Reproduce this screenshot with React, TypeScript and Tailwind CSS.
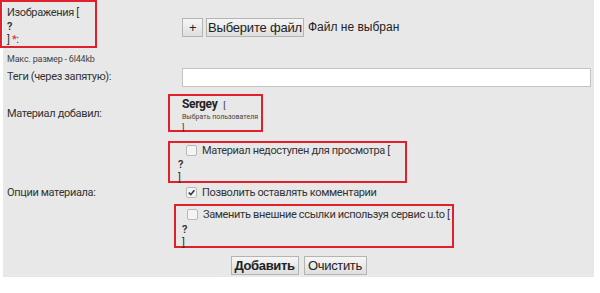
import React from "react";

const font = "font-['Roboto',sans-serif]";

function Box({ on }: { on?: boolean }) {
  return (
    <span className="inline-flex h-[11px] w-[11px] shrink-0 items-center justify-center rounded-[2px] border border-[#b9b9b9] bg-[#f4f4f4]">
      {on && (
        <svg viewBox="0 0 10 10" className="h-[9px] w-[9px]">
          <path d="M2 5.2 4.2 7.4 8.2 2.4" fill="none" stroke="#333" strokeWidth="1.8" />
        </svg>
      )}
    </span>
  );
}

function Btn({ children, bold, className = "" }: { children: React.ReactNode; bold?: boolean; className?: string }) {
  return (
    <button
      className={`flex h-[19px] items-center justify-center whitespace-nowrap border border-[#b4b4b4] bg-gradient-to-b from-[#f6f6f6] to-[#dedede] px-0 font-['Liberation_Sans',sans-serif] text-[13px] leading-none text-[#222] ${bold ? "font-bold" : ""} ${className}`}
    >
      {children}
    </button>
  );
}

export default function App() {
  return (
    <div className={`h-[293px] w-[600px] overflow-hidden whitespace-nowrap bg-white text-[11px] leading-[13.5px] tracking-[-0.35px] text-[#333] ${font}`}>
      <div className="ml-[3px] h-[277px] w-[591px] bg-[#e8e8e8]">
        {/* images */}
        <div className="flex h-[66px]">
          <div className="w-[179px]">
            <div className="-ml-[3px] h-[48px] w-[97px] border-2 border-[#e0202a] pl-[5px] pt-[4px]">
              <div>Изображения [</div>
              <div className="font-semibold">?</div>
              <div>
                ] <span className="text-[#e0202a]">*</span>:
              </div>
            </div>
            <div className="mt-[6px] pl-[4px] text-[9px] leading-[10px] tracking-[-0.2px] text-[#444]">Макс. размер - 6l44kb</div>
          </div>
          <div className="flex items-start gap-[3px] pt-[18px]">
            <Btn className="w-[21px]">+</Btn>
            <Btn className="w-[98px] tracking-[-0.2px]">Выберите файл</Btn>
            <span className="ml-[1px] pt-[3px] font-['Liberation_Sans',sans-serif] text-[12px] tracking-normal text-[#222]">Файл не выбран</span>
          </div>
        </div>

        {/* tags */}
        <div className="flex h-[26px] items-start">
          <div className="w-[179px] pl-[4px] pt-[4px]">Теги (через запятую):</div>
          <div className="mt-[2px] h-[19px] w-[409px] border border-[#c4c4c4] bg-white" />
        </div>

        {/* author */}
        <div className="flex h-[47px]">
          <div className="w-[165px] pl-[4px] pt-[15px]">Материал добавил:</div>
          <div className="mt-[2px] h-[38px] w-[95px] border-2 border-[#e0202a] pl-[12px] pt-[2px]">
            <div className="flex items-baseline">
              <span className="text-[12px] font-bold text-[#222]">Sergey</span>
              <span className="ml-[6px] text-[9px]">[</span>
            </div>
            <div className="text-[7px] leading-[9px] tracking-normal text-[#444]">Выбрать пользователя</div>
            <div className="text-[9px] leading-[10px]">]</div>
          </div>
        </div>

        {/* hidden */}
        <div className="flex h-[45px] pt-[2px]">
          <div className="w-[165px]" />
          <div className="h-[42px] w-[239px] border-2 border-[#e0202a] pl-[8px]">
            <div className="flex items-center gap-[5px] pl-[8px] pt-[1px]">
              <Box />
              <span>Материал недоступен для просмотра [</span>
            </div>
            <div className="font-semibold">?</div>
            <div>]</div>
          </div>
        </div>

        {/* options */}
        <div className="flex h-[17px] items-center">
          <div className="w-[183px] pl-[4px]">Опции материала:</div>
          <Box on />
          <span className="ml-[5px]">Позволить оставлять комментарии</span>
        </div>

        {/* replace links */}
        <div className="flex h-[52px] pt-[3px]">
          <div className="w-[171px]" />
          <div className="h-[44px] w-[280px] border-2 border-[#e0202a] pl-[6px]">
            <div className="flex items-center gap-[5px] pl-[5px] pt-[2px]">
              <Box />
              <span>Заменить внешние ссылки используя сервис u.to [</span>
            </div>
            <div className="pt-[1px] font-semibold">?</div>
            <div>]</div>
          </div>
        </div>

        <div className="mt-[3px] flex justify-center gap-[5px]">
          <Btn bold className="w-[68px]">Добавить</Btn>
          <Btn className="w-[63px]">Очистить</Btn>
        </div>
      </div>
    </div>
  );
}
